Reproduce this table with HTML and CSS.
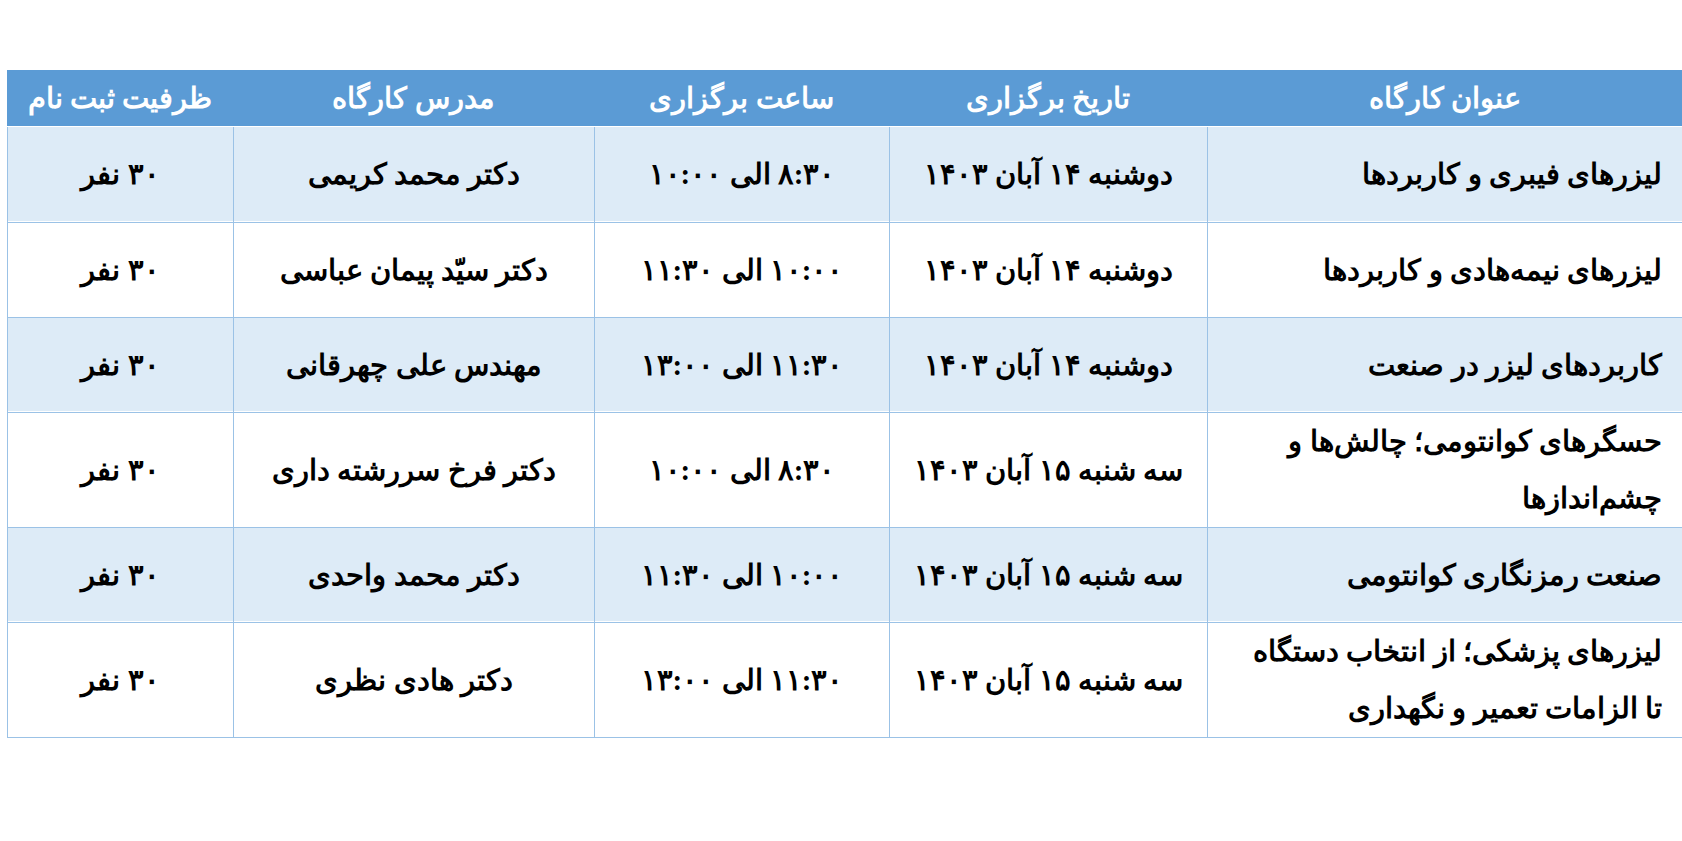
FILE: index.html
```html
<!DOCTYPE html>
<html lang="fa">
<head><meta charset="utf-8"><link rel="stylesheet" href="styles.css"></head>
<body>
<table class="schedule" dir="rtl">
  <colgroup>
    <col class="c-title">
    <col class="c-date">
    <col class="c-time">
    <col class="c-teacher">
    <col class="c-cap">
  </colgroup>
  <thead>
    <tr>
      <th>عنوان کارگاه</th>
      <th>تاریخ برگزاری</th>
      <th>ساعت برگزاری</th>
      <th>مدرس کارگاه</th>
      <th>ظرفیت ثبت نام</th>
    </tr>
  </thead>
  <tbody>
    <tr class="alt">
      <td class="title">لیزرهای فیبری و کاربردها</td>
      <td>دوشنبه ۱۴ آبان ۱۴۰۳</td>
      <td>۸:۳۰ الی ۱۰:۰۰</td>
      <td>دکتر محمد کریمی</td>
      <td>۳۰ نفر</td>
    </tr>
    <tr class="short">
      <td class="title">لیزرهای نیمه‌هادی و کاربردها</td>
      <td>دوشنبه ۱۴ آبان ۱۴۰۳</td>
      <td>۱۰:۰۰ الی ۱۱:۳۰</td>
      <td>دکتر سیّد پیمان عباسی</td>
      <td>۳۰ نفر</td>
    </tr>
    <tr class="alt short">
      <td class="title">کاربردهای لیزر در صنعت</td>
      <td>دوشنبه ۱۴ آبان ۱۴۰۳</td>
      <td>۱۱:۳۰ الی ۱۳:۰۰</td>
      <td>مهندس علی چهرقانی</td>
      <td>۳۰ نفر</td>
    </tr>
    <tr class="tall">
      <td class="title">حسگرهای کوانتومی؛ چالش‌ها و<br>چشم‌اندازها</td>
      <td>سه شنبه ۱۵ آبان ۱۴۰۳</td>
      <td>۸:۳۰ الی ۱۰:۰۰</td>
      <td>دکتر فرخ سررشته داری</td>
      <td>۳۰ نفر</td>
    </tr>
    <tr class="alt short">
      <td class="title">صنعت رمزنگاری کوانتومی</td>
      <td>سه شنبه ۱۵ آبان ۱۴۰۳</td>
      <td>۱۰:۰۰ الی ۱۱:۳۰</td>
      <td>دکتر محمد واحدی</td>
      <td>۳۰ نفر</td>
    </tr>
    <tr class="tall last">
      <td class="title">لیزرهای پزشکی؛ از انتخاب دستگاه<br>تا الزامات تعمیر و نگهداری</td>
      <td>سه شنبه ۱۵ آبان ۱۴۰۳</td>
      <td>۱۱:۳۰ الی ۱۳:۰۰</td>
      <td>دکتر هادی نظری</td>
      <td>۳۰ نفر</td>
    </tr>
  </tbody>
</table>
</body>
</html>
```
FILE: styles.css
```css
html, body {
  margin: 0;
  padding: 0;
  overflow: hidden;
  background: #ffffff;
}

.schedule {
  margin: 70px 0 0 7px;
  width: 1676px;
  border-collapse: separate;
  border-spacing: 0;
  table-layout: fixed;
  font-family: "Liberation Serif", serif;
  font-weight: bold;
  font-size: 29px;
  color: #000000;
}

.c-title { width: 476px; }
.c-date { width: 318px; }
.c-time { width: 295px; }
.c-teacher { width: 361px; }
.c-cap { width: 226px; }

.schedule th {
  box-sizing: border-box;
  height: 57px;
  padding: 0;
  background: #5b9bd5;
  color: #ffffff;
  font-weight: bold;
  text-align: center;
  vertical-align: middle;
  line-height: 40px;
  border-bottom: 1px solid #ffffff;
}

.schedule td {
  box-sizing: border-box;
  height: 96px;
  padding: 0 4px;
  text-align: center;
  vertical-align: middle;
  line-height: 57px;
  background: #ffffff;
  border-left: 1px solid #9bc2e6;
  border-bottom: 1px solid #9bc2e6;
  box-shadow: inset 0 -1px 0 #ffffff;
}

.schedule tr.alt td { background: #ddebf7; }
.schedule tr.short td { height: 95px; }
.schedule tr.tall td { height: 114px; }
.schedule tr.last td { height: 113px; }

.schedule td.title {
  text-align: right;
  padding-right: 20px;
  border-right: 1px solid #9bc2e6;
}
```
